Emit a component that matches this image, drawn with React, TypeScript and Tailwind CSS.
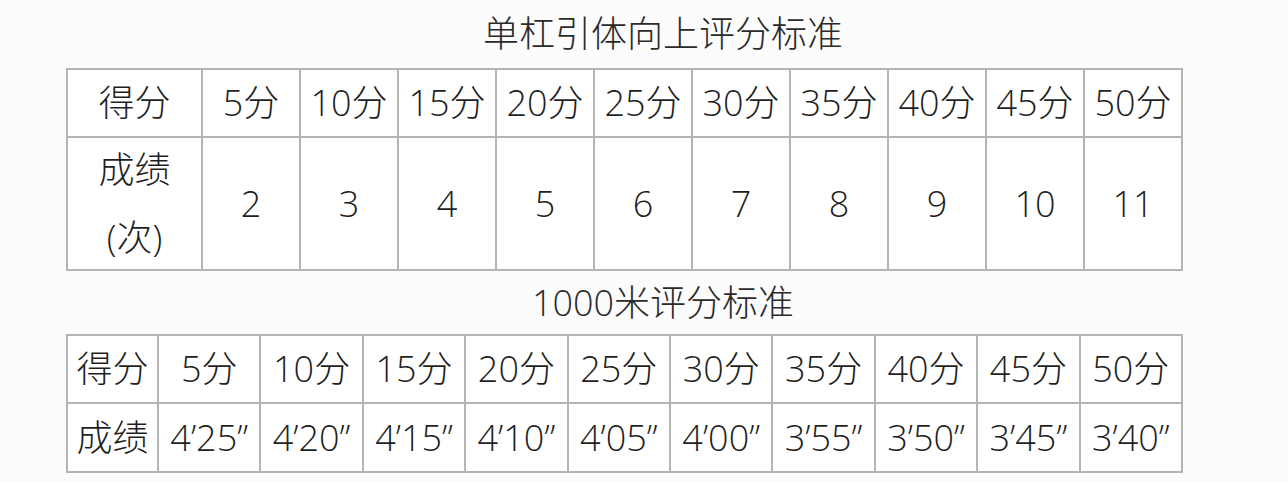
import React from "react";

const font = {
  fontFamily: '"Open Sans", "Noto Sans CJK SC", sans-serif',
};

const scores = ["5分", "10分", "15分", "20分", "25分", "30分", "35分", "40分", "45分", "50分"];
const counts = ["2", "3", "4", "5", "6", "7", "8", "9", "10", "11"];
const times = ["4’25”", "4’20”", "4’15”", "4’10”", "4’05”", "4’00”", "3’55”", "3’50”", "3’45”", "3’40”"];

function Cell({ children, className = "" }: { children: React.ReactNode; className?: string }) {
  return (
    <div className={"bg-white flex items-center justify-center text-center " + className}>{children}</div>
  );
}

export default function App() {
  return (
    <div
      className="w-[1288px] h-[482px] bg-[#fcfcfd] text-[#1f1f1f] font-light overflow-hidden"
      style={font}
    >
      <div className="ml-[66px] w-[1117px] flex flex-col">
        <div className="h-[68px] flex items-center justify-center pl-[77px] text-[36px] text-[#2a2a2a]">
          单杠引体向上评分标准
        </div>
        <div className="grid grid-cols-[133px_repeat(10,96px)] grid-rows-[66px_131px] gap-[2px] p-[2px] bg-[#b4b4b4] text-[36px]">
          <Cell>得分</Cell>
          {scores.map((s) => (
            <Cell key={s}>{s}</Cell>
          ))}
          <Cell className="flex-col leading-[68px]">
            <span>成绩</span>
            <span>(次)</span>
          </Cell>
          {counts.map((c) => (
            <Cell key={c}>{c}</Cell>
          ))}
        </div>
        <div className="h-[63px] flex items-center justify-center pl-[77px] text-[36px] text-[#2a2a2a]">
          1000米评分标准
        </div>
        <div className="grid grid-cols-[89px_repeat(10,1fr)] grid-rows-[66px_67px] gap-[2px] p-[2px] bg-[#b4b4b4] text-[36px]">
          <Cell>得分</Cell>
          {scores.map((s) => (
            <Cell key={s}>{s}</Cell>
          ))}
          <Cell>成绩</Cell>
          {times.map((t) => (
            <Cell key={t} className="whitespace-nowrap">{t}</Cell>
          ))}
        </div>
      </div>
    </div>
  );
}
